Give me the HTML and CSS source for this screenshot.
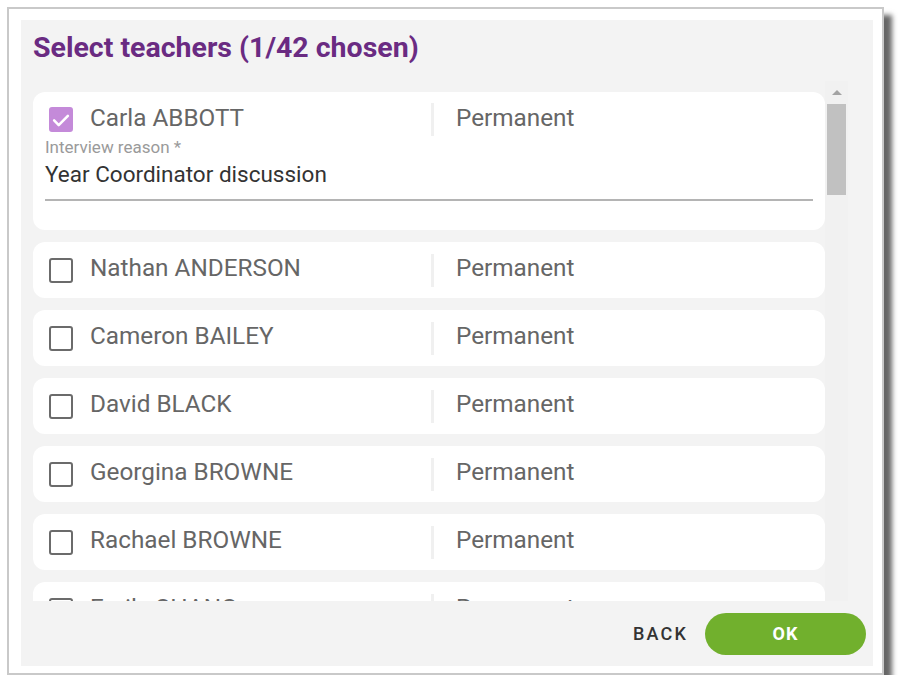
FILE: index.html
```html
<!DOCTYPE html>
<html lang="en">
<head>
<meta charset="utf-8">
<title>Select teachers</title>
<link rel="stylesheet" href="styles.css">
</head>
<body>
<div class="frame">
  <div class="panel">
    <h1 class="title">Select teachers (1/42 chosen)</h1>
    <div class="list-area">
      <div class="list">
        <div class="card card-open">
          <div class="row row-top">
            <span class="cb cb-checked">
              <svg viewBox="0 0 24 24" width="24" height="24"><path d="M4.5 12.5l5 5 10-10" fill="none" stroke="#fff" stroke-width="2.8" stroke-linecap="round" stroke-linejoin="round"/></svg>
            </span>
            <span class="name">Carla ABBOTT</span>
            <span class="sep"></span>
            <span class="type">Permanent</span>
          </div>
          <div class="field">
            <div class="field-label">Interview reason *</div>
            <div class="field-value">Year Coordinator discussion</div>
          </div>
        </div>
        <div class="card"><div class="row"><span class="cb"></span><span class="name">Nathan ANDERSON</span><span class="sep"></span><span class="type">Permanent</span></div></div>
        <div class="card"><div class="row"><span class="cb"></span><span class="name">Cameron BAILEY</span><span class="sep"></span><span class="type">Permanent</span></div></div>
        <div class="card"><div class="row"><span class="cb"></span><span class="name">David BLACK</span><span class="sep"></span><span class="type">Permanent</span></div></div>
        <div class="card"><div class="row"><span class="cb"></span><span class="name">Georgina BROWNE</span><span class="sep"></span><span class="type">Permanent</span></div></div>
        <div class="card"><div class="row"><span class="cb"></span><span class="name">Rachael BROWNE</span><span class="sep"></span><span class="type">Permanent</span></div></div>
        <div class="card"><div class="row"><span class="cb"></span><span class="name">Emily CHANG</span><span class="sep"></span><span class="type">Permanent</span></div></div>
      </div>
      <div class="scrollbar">
        <div class="sb-arrow"></div>
        <div class="sb-thumb"></div>
      </div>
    </div>
    <div class="footer">
      <button class="btn-back">BACK</button>
      <button class="btn-ok">OK</button>
    </div>
  </div>
</div>
</body>
</html>
```

FILE: styles.css
```css
html, body {
  margin: 0;
  padding: 0;
  background: #ffffff;
  font-family: Roboto, "Liberation Sans", Arial, sans-serif;
}

.frame {
  margin: 7px 0 0 7px;
  width: 873px;
  height: 664px;
  box-sizing: content-box;
  border: 2px solid #c9c9c9;
  background: #ffffff;
  padding: 0;
  box-shadow: 8px 8px 5px rgba(0, 0, 0, 0.6);
  display: flex;
}

.panel {
  margin: 11px 9px 7px 12px;
  width: 852px;
  height: 646px;
  background: #f3f3f3;
  display: flex;
  flex-direction: column;
}

.title {
  margin: 0;
  padding: 12px 12px 17px;
  font-size: 28.5px;
  line-height: 32px;
  font-weight: 700;
  color: #6a2b82;
}

.list-area {
  margin-left: 12px;
  width: 815px;
  height: 520px;
  display: flex;
  overflow: hidden;
}

.list {
  width: 792px;
  padding-top: 11px;
  display: flex;
  flex-direction: column;
  gap: 12px;
  overflow: hidden;
}

.card {
  flex: none;
  background: #ffffff;
  border-radius: 12px;
}

.row {
  height: 56px;
  display: flex;
  align-items: center;
  padding-left: 16px;
}

.row-top {
  height: 55px;
}

.cb {
  flex: none;
  width: 20px;
  height: 21px;
  border: 2px solid #6b6b6b;
  border-radius: 3px;
  margin-right: 17px;
  display: flex;
  align-items: center;
  justify-content: center;
}

.cb-checked {
  border-color: #c48ad9;
  background: #c48ad9;
}

.cb-checked svg {
  width: 22px;
  height: 22px;
  flex: none;
}

.name {
  width: 341px;
  font-size: 24.3px;
  line-height: 28px;
  color: #666666;
  margin-bottom: 4px;
}

.sep {
  flex: none;
  width: 3px;
  height: 33px;
  background: #f0f0f0;
  margin-right: 22px;
}

.type {
  font-size: 24.3px;
  line-height: 28px;
  color: #666666;
  margin-bottom: 4px;
}

.field {
  margin: -9px 12px 0;
  padding-bottom: 12px;
  border-bottom: 2px solid #b4b4b4;
}

.field-label {
  font-size: 17px;
  line-height: 18px;
  color: #9a9a9a;
}

.field-value {
  margin-top: 5px;
  font-size: 22.5px;
  line-height: 26px;
  color: #333333;
}

.card-open {
  padding-bottom: 29px;
}

.scrollbar {
  width: 23px;
  background: #f1f1f1;
  display: flex;
  flex-direction: column;
  align-items: center;
}

.sb-arrow {
  margin-top: 9px;
  width: 0;
  height: 0;
  border-left: 5px solid transparent;
  border-right: 5px solid transparent;
  border-bottom: 5px solid #a3a3a3;
}

.sb-thumb {
  margin-top: 9px;
  width: 19px;
  height: 91px;
  background: #c1c1c1;
}

.footer {
  flex: 1;
  display: flex;
  align-items: center;
  justify-content: flex-end;
  padding-right: 7px;
  gap: 9px;
}

.btn-back {
  border: none;
  background: transparent;
  font-family: Roboto, "Liberation Sans", Arial, sans-serif;
  font-size: 18px;
  font-weight: 500;
  letter-spacing: 2.2px;
  color: #333333;
  padding: 0 8px;
  height: 42px;
}

.btn-ok {
  border: none;
  width: 161px;
  height: 42px;
  border-radius: 21px;
  background: #71b02d;
  color: #ffffff;
  font-family: Roboto, "Liberation Sans", Arial, sans-serif;
  font-size: 18px;
  font-weight: 700;
  letter-spacing: 1px;
}
```
